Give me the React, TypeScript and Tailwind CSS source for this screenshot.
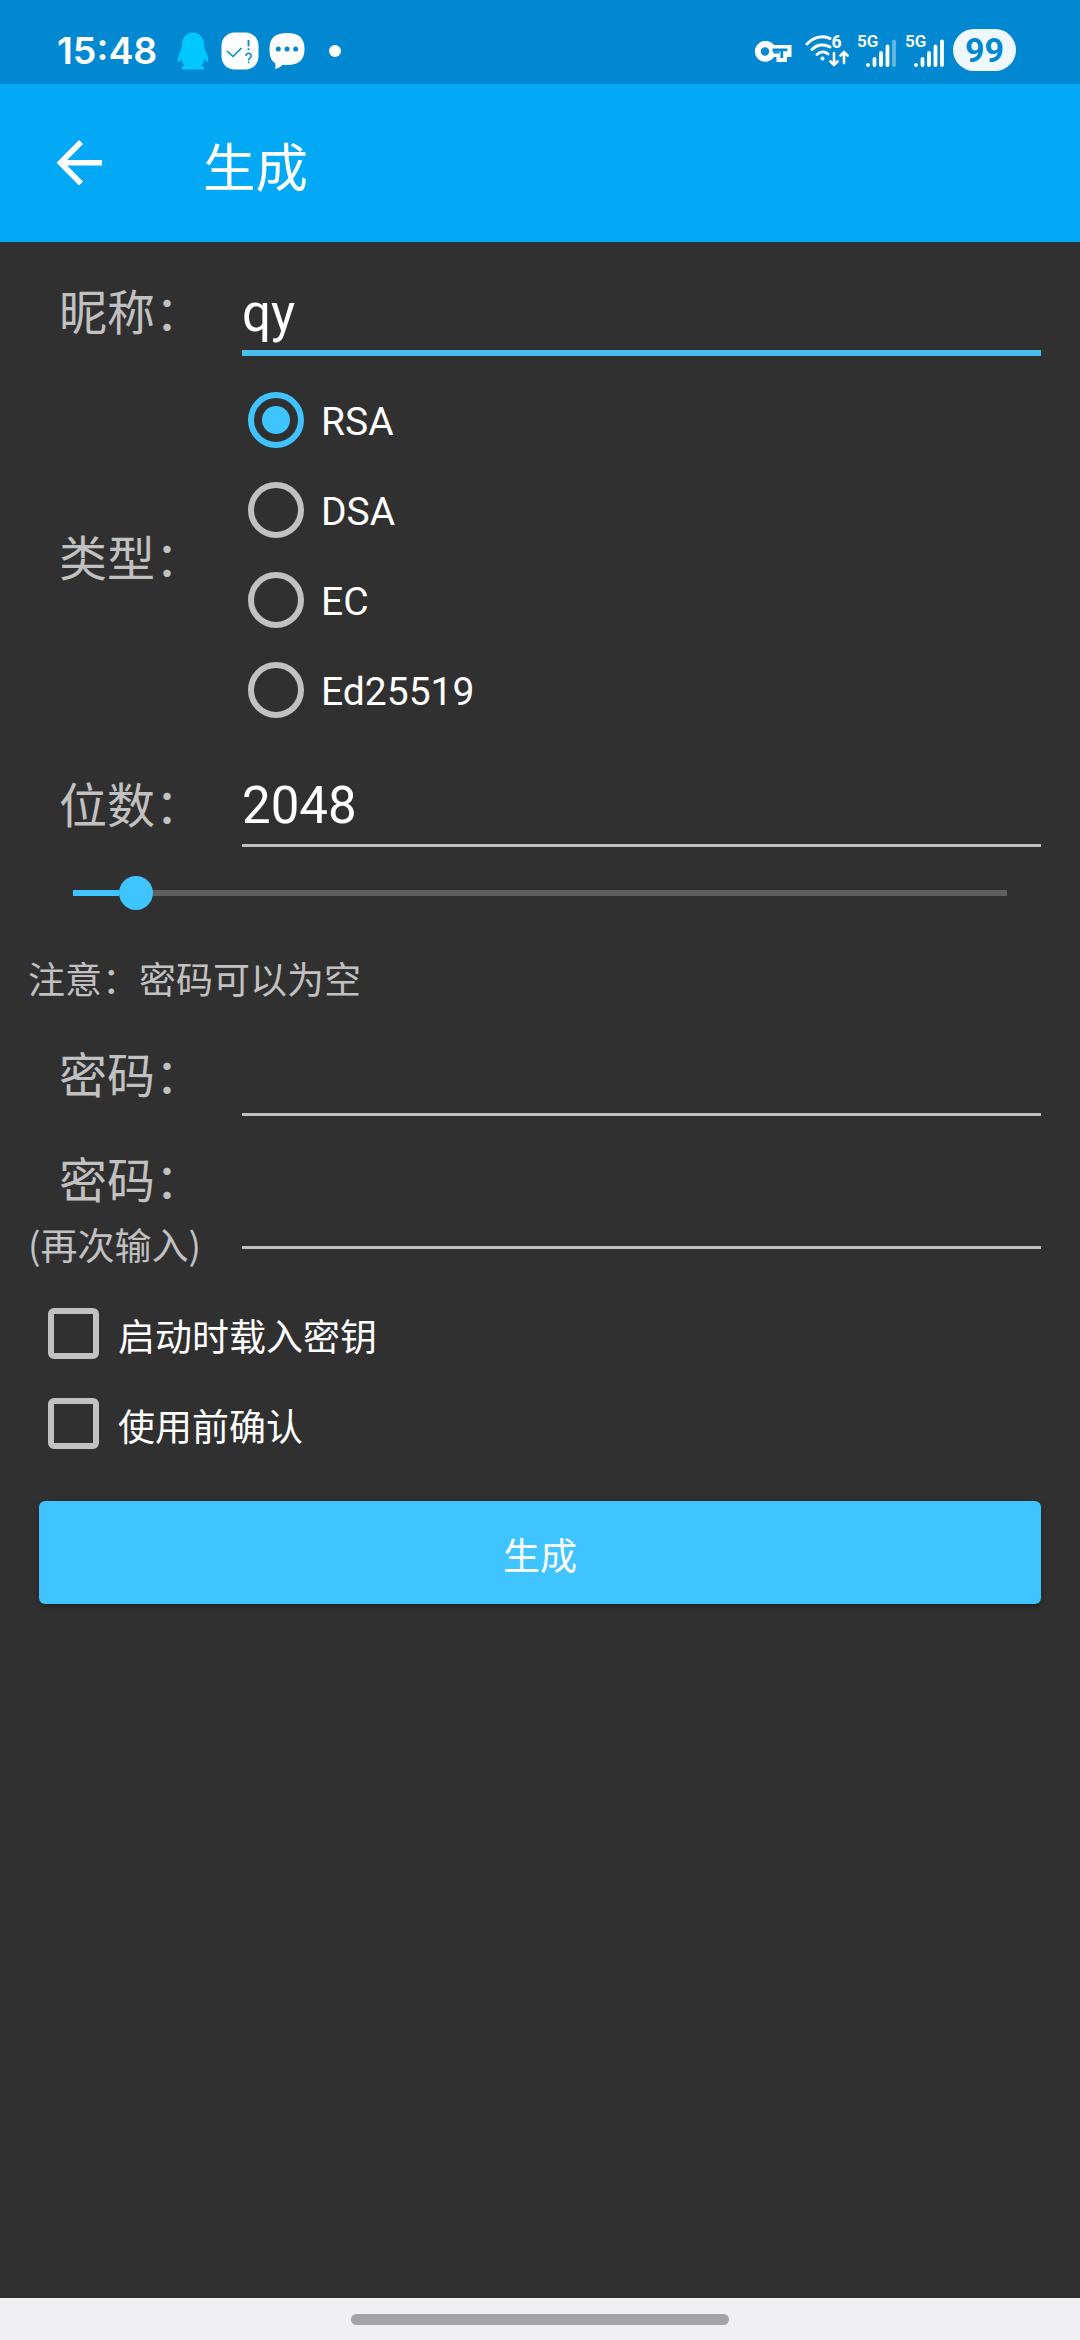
import { clsx } from "clsx"
import type { ReactNode } from "react"

const keyTypes = ["RSA", "DSA", "EC", "Ed25519"]

function QQIcon() {
  return (
    <svg className="h-[38px] w-8" viewBox="0 0 32 38" fill="#00c8ff">
      <path d="M16 0.5C9.5 0.5 5 5.5 4.8 12.5C4.8 15 4.3 17 3 20C1.2 24 0.3 27.5 0.8 29.6C1.2 30.8 2.6 29.5 4.4 27C5 30 6.2 32 7.6 33.6C5.5 34.4 4.6 35.4 4.8 37.5H27.2C27.4 35.4 26.5 34.4 24.4 33.6C25.8 32 27 30 27.6 27C29.4 29.5 30.8 30.8 31.2 29.6C31.7 27.5 30.8 24 29 20C27.7 17 27.2 15 27.2 12.5C27 5.5 22.5 0.5 16 0.5Z" />
    </svg>
  )
}

function CheckBadgeIcon() {
  return (
    <svg className="h-[38px] w-[38px]" viewBox="0 0 38 38" fill="none">
      <rect x="0.5" y="0.5" width="37" height="37" rx="13" fill="#fff" />
      <path d="M6 19L12 24.5L20.5 16" stroke="#0288d1" strokeWidth="1.6" />
      <path d="M27.5 8V14.5M27.5 16.2V18" stroke="#0288d1" strokeWidth="1.8" />
      <path d="M25 24C25 20.4 30.2 20.4 30.2 23.8C30.2 26 27.6 25.8 27.6 28.4M27.6 29.6V31.2" stroke="#0288d1" strokeWidth="1.5" />
    </svg>
  )
}

function MessageIcon() {
  return (
    <svg className="h-[38px] w-9" viewBox="0 0 36 38">
      <path
        d="M18 1C29.5 1 35.5 5.5 35.5 17C35.5 28.5 29.5 33 18 33C16.5 33 15 33 13.5 32.8C11.5 35 9.3 36.4 6 37C6.6 35.2 6.7 33.4 6.2 31.2C2 28.6 0.5 24 0.5 17C0.5 5.5 6.5 1 18 1Z"
        fill="#fff"
      />
      <g fill="#0288d1">
        <circle cx="9.3" cy="17" r="2.5" />
        <circle cx="18" cy="17" r="2.5" />
        <circle cx="26.7" cy="17" r="2.5" />
      </g>
    </svg>
  )
}

function VpnKeyIcon() {
  return (
    <svg className="h-6 w-[38px]" viewBox="0 0 38 24" fill="none">
      <path d="M11 1A10.400 10.400 0 1 0 20 17H22.500V22H33V17H37.500V5H20A10.400 10.400 0 0 0 11 1Z" fill="#fff" />
      <circle cx="11" cy="11.500" r="4.200" fill="#0288d1" />
      <path d="M18.500 9.800H33.500M27.800 10V18" stroke="#0288d1" strokeWidth="2.800" />
      <path d="M18.500 11.200L20 13.400H25.500V11.200" fill="#0288d1" />
    </svg>
  )
}

function WifiIcon() {
  return (
    <svg className="h-10 w-11" viewBox="0 -4 44 40" fill="none" stroke="#fff" strokeLinecap="round">
      <path d="M2 10C9 2.5 19 1 25 4.5" strokeWidth="3" />
      <path d="M7 15.5C12 10.5 19 9.5 25 13" strokeWidth="3" />
      <path d="M12 20.5C15.5 17.3 20 17.3 23 20" strokeWidth="3" />
      <circle cx="17.5" cy="24.5" r="2" fill="#fff" stroke="none" />
      <path d="M29 19V31M25.500 27.500L29 31L32.500 27.500M39 29V18M35.500 21.500L39 18L42.500 21.500" strokeWidth="2.6" />
      <text x="26.500" y="13.500" fill="#fff" stroke="none" fontSize="17.5" className="font-['Roboto',sans-serif] font-bold">
        6
      </text>
    </svg>
  )
}

function SignalIcon({ weak = false }: { weak?: boolean }) {
  return (
    <svg className="h-[38px] w-[39px]" viewBox="0 -4 39 38" stroke="#fff" strokeWidth="3.8" strokeLinecap="round">
      <text x="0" y="13" fill="#fff" stroke="none" fontSize="17" className="font-['Roboto',sans-serif] font-semibold">
        5G
      </text>
      <path d="M11 31V30.9M17.5 31V25M24 31V19M30.5 31V12.500" />
      <path d="M37 31V7.5" strokeOpacity={weak ? 0.4 : 1} />
    </svg>
  )
}

function StatusBar() {
  return (
    <div className="flex h-[84px] items-start bg-[#0288d1] pl-[57px] pr-16 pt-[28px] text-white">
      <span className="w-[100px] font-['Inter',sans-serif] text-[37.5px] font-semibold leading-[45px]">15:48</span>
      <div className="ml-5 mt-1 flex items-center">
        <QQIcon />
        <span className="w-3" />
        <CheckBadgeIcon />
        <span className="w-2.5" />
        <MessageIcon />
        <span className="ml-6 size-3 rounded-full bg-white" />
      </div>
      <div className="ml-auto flex items-start">
        <div className="mt-[12px]">
          <VpnKeyIcon />
        </div>
        <div className="ml-[13px] mt-0.5">
          <WifiIcon />
        </div>
        <div className="ml-2 mt-0.5 flex gap-[9px]">
          <SignalIcon weak />
          <SignalIcon />
        </div>
        <span className="ml-[9px] mt-px flex h-[42px] w-[63px] items-center justify-center rounded-full bg-[#f0f8ff] font-['Roboto',sans-serif] text-[34px] font-bold leading-none text-[#0288d1]">
          99
        </span>
      </div>
    </div>
  )
}

function AppBar() {
  return (
    <header className="flex h-[158px] items-center bg-[#03a9f4] pl-[56px]">
      <svg className="h-[46px] w-[46px]" viewBox="0 0 46 46" fill="none" stroke="#fff" strokeWidth="5.6">
        <path d="M25 2L4.5 22.7L25 43.5M4.5 22.7H46" />
      </svg>
      <h1 className="ml-[101px] mt-[3px] text-[52.5px] leading-none">生成</h1>
    </header>
  )
}

function Label({ children }: { children: ReactNode }) {
  return <span className="block pl-[31px] text-[48px] leading-[56px] text-[#c1c1c1]">{children}</span>
}

function Field({ value, focused = false, className }: { value?: string; focused?: boolean; className?: string }) {
  return (
    <div
      className={clsx(
        "flex w-[799px] items-end font-['Roboto',sans-serif] text-[51px] leading-[60px]",
        focused ? "border-b-[6px] border-[#49bfee] pb-1.5" : "border-b-[3px] border-[#c1c1c1] pb-2",
        className,
      )}
    >
      {value}
    </div>
  )
}

function Checkbox({ children }: { children: ReactNode }) {
  return (
    <div className="flex h-[90px] items-center pl-5">
      <span className="size-[51px] rounded-[6px] border-[6px] border-[#c1c1c1]" />
      <span className="ml-[19px] mt-1 text-[37px] leading-[44px]">{children}</span>
    </div>
  )
}

export default function App() {
  return (
    <div className="flex h-[2340px] w-[1080px] flex-col bg-[#303030] font-['Noto_Sans_CJK_SC',sans-serif] text-white">
      <StatusBar />
      <AppBar />

      <main className="flex-1 pl-[28px] pr-[39px]">
        <div className="flex h-[114px] justify-between">
          <div className="pt-[39px]">
            <Label>昵称：</Label>
          </div>
          <Field value="qy" focused />
        </div>

        <div className="mt-[19px] flex h-[360px] items-center">
          <div className="w-[220px]">
            <Label>类型：</Label>
          </div>
          <div>
            {keyTypes.map((type, index) => (
              <div key={type} className="flex h-[90px] items-center">
                <span
                  className={clsx(
                    "flex size-14 items-center justify-center rounded-full border-[6px]",
                    index === 0 ? "border-[#40c4ff]" : "border-[#c1c1c1]",
                  )}
                >
                  {index === 0 && <span className="size-7 rounded-full bg-[#40c4ff]" />}
                </span>
                <span className="ml-[17px] mt-1 font-['Roboto',sans-serif] text-[39px] leading-none">{type}</span>
              </div>
            ))}
          </div>
        </div>

        <div className="flex h-[112px] justify-between">
          <div className="pt-[39px]">
            <Label>位数：</Label>
          </div>
          <Field value="2048" />
        </div>

        <div className="ml-[45px] mr-[34px] mt-[29px] flex h-[34px] items-center">
          <span className="h-[6px] w-[46px] bg-[#40c4ff]" />
          <span className="size-[34px] rounded-full bg-[#40c4ff]" />
          <span className="h-[6px] flex-1 bg-[#5f5f5f]" />
        </div>

        <p className="mt-[46px] text-[37px] leading-[44px] text-[#c1c1c1]">注意：密码可以为空</p>

        <div className="mt-[17px] flex h-[99px] justify-between">
          <div className="pt-[27px]">
            <Label>密码：</Label>
          </div>
          <Field />
        </div>

        <div className="mt-[33px] flex h-[119px] justify-between">
          <div>
            <Label>密码：</Label>
            <span className="mt-[17px] block text-[37px] leading-[44px] text-[#c1c1c1]">(再次输入)</span>
          </div>
          <Field className="h-[100px]" />
        </div>

        <div className="mt-5">
          <Checkbox>启动时载入密钥</Checkbox>
          <Checkbox>使用前确认</Checkbox>
        </div>

        <button className="ml-[11px] mt-[33px] flex h-[103px] w-[1002px] items-center justify-center rounded-[6px] bg-[#40c4ff] pt-[5px] text-[37px] shadow-[0_3px_6px_rgba(0,0,0,0.3)]">
          生成
        </button>
      </main>

      <div className="flex h-[42px] justify-center bg-[#f0f0f2] pt-4">
        <span className="h-[11px] w-[378px] rounded-full bg-[#a4a4a6]" />
      </div>
    </div>
  )
}
